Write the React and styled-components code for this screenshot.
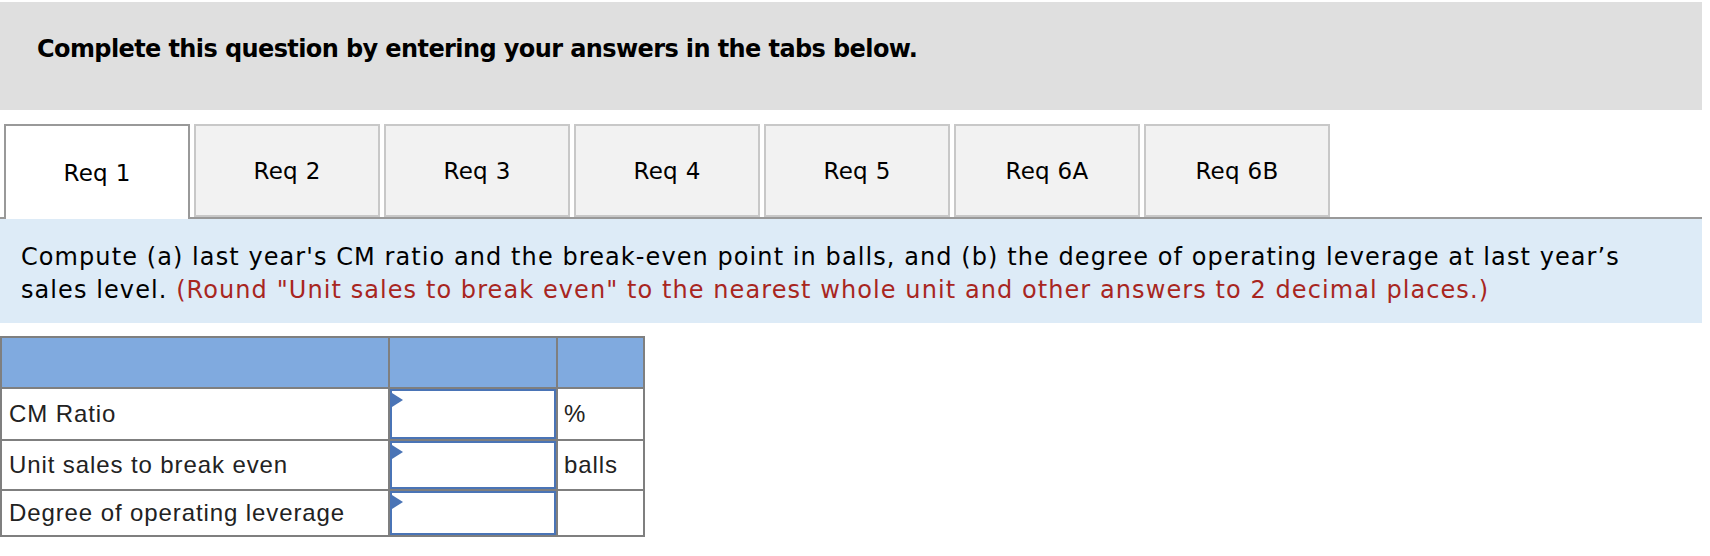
import React from "react";
import styled, { createGlobalStyle } from "styled-components";

const GlobalStyle = createGlobalStyle`
  body {
    margin: 0;
    background: #fff;
    font-family: "DejaVu Sans", Verdana, sans-serif;
  }
`;

const Page = styled.div`
  width: 1702px;
  padding-top: 2px;
`;

// grey instruction band
const Banner = styled.div`
  height: 108px;
  box-sizing: border-box;
  padding: 32px 0 0 37px;
  background-color: #dfdfdf;
  font-weight: bold;
  font-size: 24px;
  line-height: 30px;
  letter-spacing: -0.6px;
  color: #000;
`;

const TabBar = styled.div`
  display: flex;
  align-items: flex-end;
  gap: 4px;
  height: 95px;
  box-sizing: border-box;
  margin-top: 14px;
  padding-left: 4px;
  border-bottom: 2px solid #999;
`;

const Tab = styled.div`
  display: flex;
  align-items: center;
  justify-content: center;
  width: 186px;
  height: ${(p) => (p.$active ? "95px" : "93px")};
  margin-bottom: ${(p) => (p.$active ? "-2px" : "0")};
  box-sizing: border-box;
  border: 2px solid ${(p) => (p.$active ? "#999" : "#c8c8c8")};
  border-bottom: ${(p) => (p.$active ? "none" : "2px solid #c8c8c8")};
  background-color: ${(p) => (p.$active ? "#fff" : "#f2f2f2")};
  font-size: 23px;
  letter-spacing: 0.3px;
  color: #000;
  position: relative;
  z-index: ${(p) => (p.$active ? 1 : 0)};
`;

const Prompt = styled.div`
  height: 104px;
  box-sizing: border-box;
  padding: 22px 0 0 21px;
  background-color: #ddebf7;
  font-size: 24px;
  line-height: 33px;
  letter-spacing: 1.08px;
  color: #000;
`;

const Hint = styled.span`
  color: #a8261f;
`;

const Grid = styled.table`
  margin-top: 13px;
  border-collapse: collapse;
  font-family: "Liberation Sans", Arial, sans-serif;
  font-size: 24px;
  letter-spacing: 0.9px;
  color: #222;

  td {
    border: 2px solid #7f7f7f;
    padding: 0;
  }
`;

const HeadCell = styled.td`
  height: 49px;
  background-color: #80aadf;
  width: ${(p) => p.$w}px;
`;

const Label = styled.td`
  height: ${(p) => p.$h}px;
  padding-left: 7px !important;
`;

const InputCell = styled.td`
  position: relative;
  height: ${(p) => p.$h}px;
`;

const AnswerBox = styled.div`
  position: absolute;
  inset: 0 0 0 0;
  border: 2px solid #4a74b6;
  background: #fff;
`;

const Marker = styled.span`
  position: absolute;
  left: 0;
  top: 2px;
  width: 0;
  height: 0;
  border-top: 7px solid transparent;
  border-bottom: 7px solid transparent;
  border-left: 11px solid #4a74b6;
`;

const Unit = styled.td`
  padding-left: 6px !important;
`;

const tabs = ["Req 1", "Req 2", "Req 3", "Req 4", "Req 5", "Req 6A", "Req 6B"];

const rows = [
  { label: "CM Ratio", unit: "%", h: 50 },
  { label: "Unit sales to break even", unit: "balls", h: 48 },
  { label: "Degree of operating leverage", unit: "", h: 44 },
];

const App = () => {
  return (
    <>
      <GlobalStyle />
      <Page>
        <Banner>Complete this question by entering your answers in the tabs below.</Banner>
        <TabBar>
          {tabs.map((t, i) => (
            <Tab key={t} $active={i === 0}>
              {t}
            </Tab>
          ))}
        </TabBar>
        <Prompt>
          Compute (a) last year's CM ratio and the break-even point in balls, and (b) the degree of operating leverage at last year’s
          <br />
          sales level.{" "}
          <Hint>
            (Round "Unit sales to break even" to the nearest whole unit and other answers to 2 decimal places.)
          </Hint>
        </Prompt>
        <Grid>
          <tbody>
            <tr>
              <HeadCell $w={386} />
              <HeadCell $w={166} />
              <HeadCell $w={85} />
            </tr>
            {rows.map((r) => (
              <tr key={r.label}>
                <Label $h={r.h}>{r.label}</Label>
                <InputCell $h={r.h}>
                  <AnswerBox>
                    <Marker />
                  </AnswerBox>
                </InputCell>
                <Unit>{r.unit}</Unit>
              </tr>
            ))}
          </tbody>
        </Grid>
      </Page>
    </>
  );
};

export default App;
